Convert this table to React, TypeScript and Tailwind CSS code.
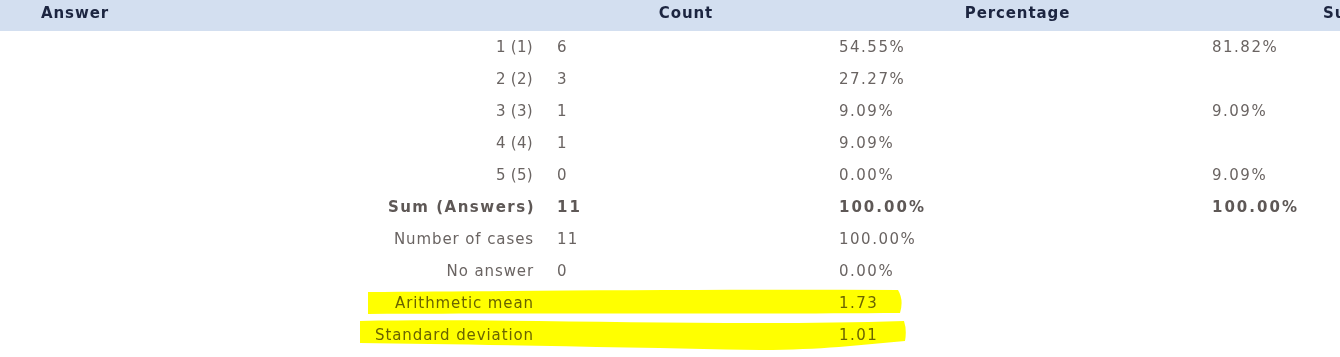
import React from "react";

type Row = { label: string; count: string; pct: string; sum: string; bold?: boolean; tight?: boolean };

const rows: Row[] = [
  { label: "1 (1)", count: "6", pct: "54.55%", sum: "81.82%", tight: true },
  { label: "2 (2)", count: "3", pct: "27.27%", sum: "", tight: true },
  { label: "3 (3)", count: "1", pct: "9.09%", sum: "9.09%", tight: true },
  { label: "4 (4)", count: "1", pct: "9.09%", sum: "", tight: true },
  { label: "5 (5)", count: "0", pct: "0.00%", sum: "9.09%", tight: true },
  { label: "Sum (Answers)", count: "11", pct: "100.00%", sum: "100.00%", bold: true },
  { label: "Number of cases", count: "11", pct: "100.00%", sum: "" },
  { label: "No answer", count: "0", pct: "0.00%", sum: "" },
  { label: "Arithmetic mean", count: "", pct: "1.73", sum: "" },
  { label: "Standard deviation", count: "", pct: "1.01", sum: "" },
];

export default function App() {
  return (
    <div className="relative w-[1340px] h-[357px] overflow-hidden bg-white text-[15px] tracking-[0.9px] text-[#6a6462] font-['DejaVu_Sans',sans-serif]">
      <div className="w-[1504px]">
        <div className="flex h-[31px] items-start bg-[#d3dff0] font-bold text-[#1c2540]">
          <div className="w-[545px] pl-[41px] pt-[2px] leading-[22px]">Answer</div>
          <div className="w-[282px] text-center pt-[2px] leading-[22px]">Count</div>
          <div className="w-[377px] text-center pt-[2px] leading-[22px] pl-[4px]">Percentage</div>
          <div className="w-[300px] pl-[119px] pt-[2px] leading-[22px]">Sum</div>
        </div>
        {rows.map((r, i) => (
          <div key={i} className={`flex h-8 items-center ${r.bold ? "font-bold text-[#5e5856]" : ""}`}>
            <div
              className={`w-[545px] text-right whitespace-nowrap ${
                r.bold ? "tracking-[1.5px] pr-[10px]" : r.tight ? "tracking-[0.3px] pr-[12px]" : "pr-[11px]"
              }`}
            >
              {r.label}
            </div>
            <div className={`w-[282px] pl-[12px] ${r.bold ? "tracking-[2px]" : "tracking-[1.2px]"}`}>{r.count}</div>
            <div className={`w-[373px] pl-[12px] ${r.bold ? "tracking-[2px]" : "tracking-[1.5px]"}`}>{r.pct}</div>
            <div className={`w-[304px] pl-[12px] ${r.bold ? "tracking-[2px]" : "tracking-[1.5px]"}`}>{r.sum}</div>
          </div>
        ))}
      </div>
      <svg
        className="absolute left-0 top-0 pointer-events-none mix-blend-multiply"
        width="1340"
        height="357"
        viewBox="0 0 1340 357"
      >
        <path
          d="M368,292 C500,291 700,289 898,290 Q904,300 900,313 C760,314 600,313 368,314 Z"
          fill="#ffff00"
        />
        <path
          d="M360,321 C520,318 720,327 904,321 Q907,330 905,341 C860,345 820,350 760,350 C600,347 460,344 360,343 Z"
          fill="#ffff00"
        />
      </svg>
    </div>
  );
}
